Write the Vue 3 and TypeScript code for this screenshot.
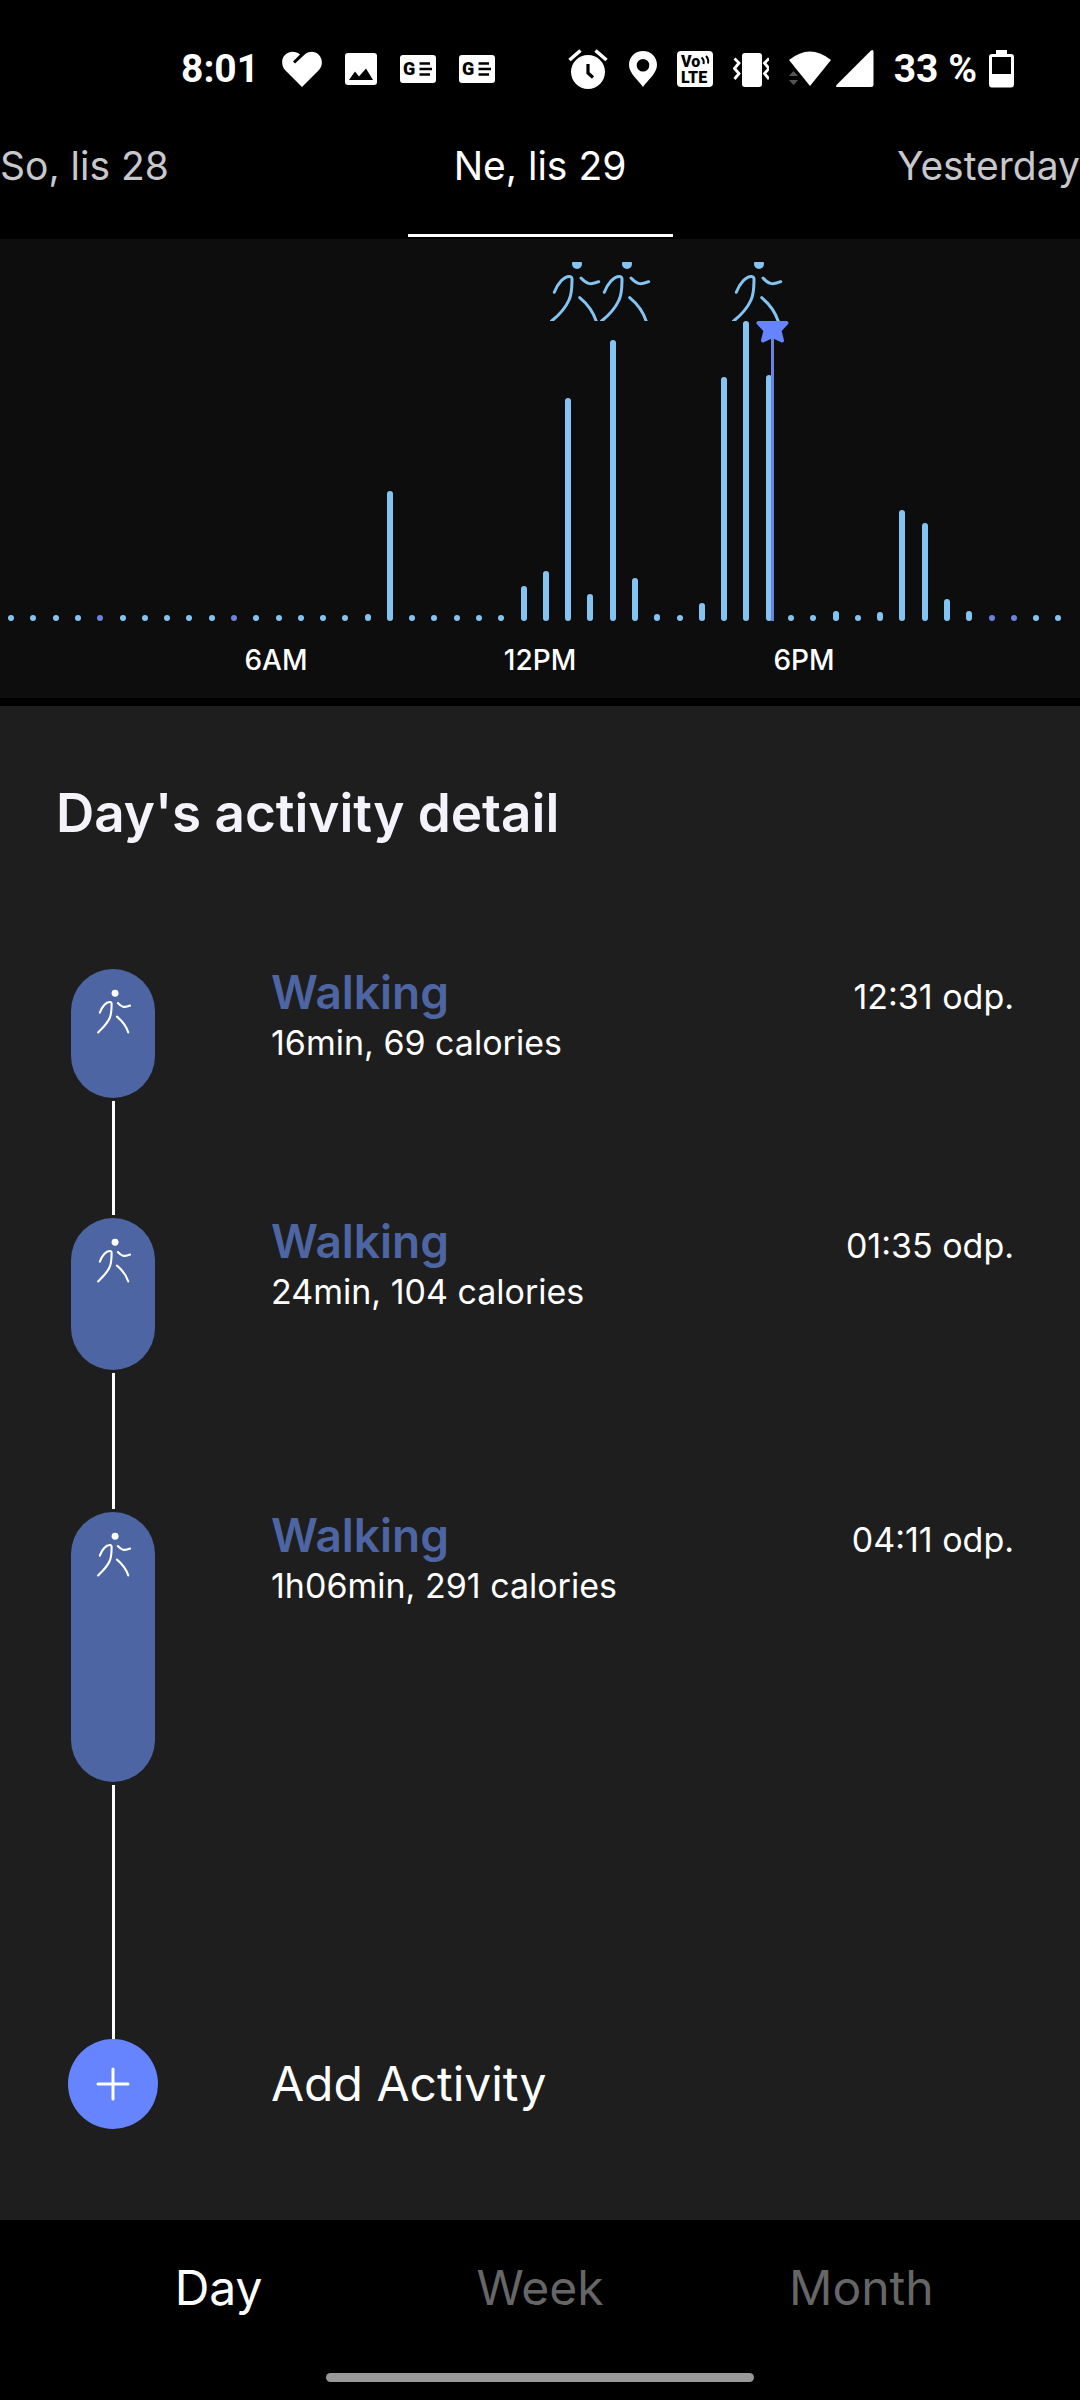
<script setup lang="ts">
interface Bar {
  height: number
  night?: boolean
}

interface Activity {
  name: string
  summary: string
  time: string
  pill: number
  row: number
}

const DOT = 6
const heights: Record<number, number> = {
  16: 7, 17: 130, 23: 35, 24: 50, 25: 223, 26: 27, 27: 281, 28: 43, 29: 7,
  31: 18, 32: 244, 33: 300, 34: 246, 37: 10, 39: 9, 40: 111, 41: 98, 42: 22, 43: 10,
}
const nightSlots = [4, 10, 44, 45]

// One bar for each half hour of the day
const bars: Bar[] = Array.from({ length: 48 }, (_, i) => ({
  height: heights[i] ?? DOT,
  night: nightSlots.includes(i),
}))

const walkMarks = [50.9, 55.6, 67.8]

const dates = ['So, lis 28', 'Ne, lis 29', 'Yesterday']
const hours = ['6AM', '12PM', '6PM']
const periods = ['Day', 'Week', 'Month']

const activities: Activity[] = [
  { name: 'Walking', summary: '16min, 69 calories', time: '12:31 odp.', pill: 129, row: 249 },
  { name: 'Walking', summary: '24min, 104 calories', time: '01:35 odp.', pill: 152, row: 294 },
  { name: 'Walking', summary: '1h06min, 291 calories', time: '04:11 odp.', pill: 270, row: 527 },
]
</script>

<template>
  <div class="screen">
    <header class="status">
      <div class="status-left">
        <span class="clock">8:01</span>
        <svg width="40" height="40" viewBox="0 0 40 40">
          <path d="M20 38 L3.500 21.500 C-1 17 -1 9 3.500 5.500 C8 1.500 14 2 18 5.500 L11 12.500 L13 14.500 L23.500 4.800 C27.500 1.700 33 2 36.500 5.500 C41 10 41 17 36.500 21.500 Z" fill="#fff" />
        </svg>
        <svg width="32" height="40" viewBox="0 0 32 40">
          <rect x="0" y="4" width="32" height="32" rx="3" fill="#fff" />
          <path d="M4 31 L10 22.500 L14 27.500 L21 19.500 L28 31 Z" fill="#000" />
        </svg>
        <svg v-for="n in 2" :key="n" width="36" height="40" viewBox="0 0 36 40">
          <rect x="0" y="6" width="36" height="28" rx="3" fill="#fff" />
          <text x="3" y="26" class="glyph" font-size="18">G</text>
          <path d="M19.500 14.500 H30 M19.500 20 H32 M19.500 25.500 H30" stroke="#000" stroke-width="2.500" />
        </svg>
      </div>
      <div class="status-right">
        <svg width="42" height="40" viewBox="0 0 42 40">
          <circle cx="21" cy="23" r="17" fill="#fff" />
          <path d="M2.500 11 L13.500 1.500 M39.500 11 L28.500 1.500" stroke="#fff" stroke-width="3.600" />
          <path d="M21 15 V24 L26 28.500" fill="none" stroke="#000" stroke-width="3.200" />
        </svg>
        <svg width="28" height="40" viewBox="0 0 28 40">
          <path fill-rule="evenodd" d="M14 2 C6 2 0 8 0 16 C0 24 9 31 14 38 C19 31 28 24 28 16 C28 8 22 2 14 2 Z M14 10 A6.300 6.300 0 1 1 14 22.600 A6.300 6.300 0 1 1 14 10 Z" fill="#fff" />
        </svg>
        <svg width="36" height="40" viewBox="0 0 36 40">
          <rect x="0" y="2" width="36" height="36" rx="4" fill="#fff" />
          <text x="4" y="18" class="glyph" font-size="16">Vo</text>
          <path d="M24.500 8.500 Q27.500 11 26.500 15 M29 7 Q32 10 31 14.500" fill="none" stroke="#000" stroke-width="2" />
          <text x="4" y="34" class="glyph" font-size="16">LTE</text>
        </svg>
        <svg width="36" height="40" viewBox="0 0 36 40">
          <rect x="9" y="4" width="20" height="34" rx="3" fill="#fff" />
          <path d="M1.500 9.500 L6 14 L1.500 19.500 L6 24.500 L1.500 30 M36 9.500 L31.500 14 L36 19.500 L31.500 24.500 L36 30" fill="none" stroke="#fff" stroke-width="2.800" />
        </svg>
        <svg width="85" height="40" viewBox="0 0 85 40">
          <path d="M0 11 Q21 -6 42 11 L21 37 Z" fill="#fff" />
          <path d="M0 27 L4.500 22 L9 27 Z M0 31 L4.500 36 L9 31 Z" fill="#555" />
          <path d="M82 1.500 Q84.500 0 84.500 3 V36 Q84.500 38 82 38 H48 Q46 38 48 35.500 Z" fill="#fff" />
        </svg>
        <div class="battery">
          <span class="clock">33 %</span>
          <svg width="25" height="40" viewBox="0 0 25 40">
            <path fill-rule="evenodd" d="M7 1 H18 V5 H22 Q25 5 25 8 V35 Q25 38.500 22 38.500 H3 Q0 38.500 0 35 V8 Q0 5 3 5 H7 Z M3 8 V25 H22 V8 Z" fill="#fff" />
          </svg>
        </div>
      </div>
    </header>

    <nav class="dates">
      <button v-for="(date, i) in dates" :key="date" class="date" :class="{ current: i === 1 }">{{ date }}</button>
    </nav>

    <section class="chart">
      <svg
        v-for="left in walkMarks"
        :key="left"
        class="walk-mark"
        :style="{ left: left + '%' }"
        width="52"
        height="59"
        viewBox="0 0 52 59"
      >
        <circle cx="27" cy="2" r="5" />
        <path d="M4.300 30.300 C8 21 14 14.300 19.500 14.500 Q22.200 14.600 22 18 C21.800 26 22 32 19 38 C15 47 8 54 1 59.500 M31 16 C36 21.500 40 23.500 48.700 19.700 M29.700 35.700 C38 42.500 43 49 46.500 60" />
      </svg>
      <div class="bars">
        <div v-for="(bar, i) in bars" :key="i" class="slot">
          <div class="bar" :class="{ night: bar.night }" :style="{ height: bar.height + 'px' }"></div>
        </div>
        <div class="goal">
          <svg width="33" height="23" viewBox="0 0 33 23">
            <path d="M2.500 2 H30.500 L23.500 9.500 L26 19.500 L16.500 15 L7 19.500 L9.500 9.500 Z" />
          </svg>
        </div>
      </div>
      <div class="hours">
        <span v-for="hour in hours" :key="hour">{{ hour }}</span>
      </div>
    </section>

    <main class="detail">
      <h1>Day's activity detail</h1>
      <ul class="timeline">
        <li v-for="(item, i) in activities" :key="i" class="activity" :style="{ minHeight: item.row + 'px' }">
          <div class="rail">
            <div class="pill" :style="{ height: item.pill + 'px' }">
              <svg width="36" height="46" viewBox="-2 -4 52 66">
                <circle cx="27" cy="2" r="5" />
                <path d="M5 30 C8 21 14 14.300 19.500 14.500 Q22.200 14.600 22 18 C21.800 26 22 32 19 38 C15 47 8 53 2.500 58.500 M31 16 C36 21.500 40 23.500 48.700 19.700 M29.700 35.700 C38 42.500 43 49 46 58.500" />
              </svg>
            </div>
            <div class="connector"></div>
          </div>
          <div class="info">
            <div class="title-row">
              <h2>{{ item.name }}</h2>
              <time>{{ item.time }}</time>
            </div>
            <p>{{ item.summary }}</p>
          </div>
        </li>
      </ul>
      <button class="add">
        <span class="add-icon">
          <svg width="34" height="34" viewBox="0 0 34 34">
            <path d="M17 2 V32 M2 17 H32" fill="none" stroke="#fff" stroke-width="3" stroke-linecap="round" />
          </svg>
        </span>
        <span>Add Activity</span>
      </button>
    </main>

    <footer class="bottom">
      <nav class="periods">
        <button v-for="(period, i) in periods" :key="period" class="period" :class="{ current: i === 0 }">{{ period }}</button>
      </nav>
      <div class="handle"></div>
    </footer>
  </div>
</template>

<style>
body {
  margin: 0;
  background: #000;
}
</style>

<style scoped>
.screen {
  display: flex;
  flex-direction: column;
  min-height: 100vh;
  background: #000;
  color: #fff;
  font-family: Inter, "Liberation Sans", sans-serif;
  overflow: hidden;
}

button {
  border: 0;
  padding: 0;
  background: none;
  color: inherit;
  font: inherit;
  white-space: nowrap;
}

svg {
  display: block;
  flex: none;
}

.status {
  display: flex;
  justify-content: space-between;
  padding: 41px 66px 0 181px;
}

.status-left,
.status-right,
.battery {
  display: flex;
  align-items: center;
}

.status-left {
  gap: 23px;
}

.status-right {
  gap: 20px;
}

.battery {
  gap: 12px;
}

.clock {
  font: 700 39px/56px Roboto, sans-serif;
}

.glyph {
  font-family: Roboto, sans-serif;
  font-weight: 900;
  fill: #000;
}

.dates {
  display: grid;
  grid-template-columns: 1fr 265px 1fr;
  padding-bottom: 2px;
}

.date {
  padding: 45px 0 44px;
  border-bottom: 3px solid transparent;
  font-size: 39px;
  line-height: 48px;
  color: #c8c8cc;
  text-align: left;
}

.date:last-child {
  text-align: right;
}

.date.current {
  border-color: #fff;
  color: #fff;
  text-align: center;
}

.chart {
  position: relative;
  padding: 82px 0 20px;
  background: #0d0d0d;
  border-bottom: 8px solid #000;
}

.walk-mark {
  position: absolute;
  top: 23px;
  fill: none;
  stroke: #84c4f3;
  stroke-width: 3;
  stroke-linecap: round;
}

.walk-mark circle {
  fill: #84c4f3;
  stroke: none;
}

.bars {
  position: relative;
  display: flex;
  align-items: flex-end;
  height: 300px;
  padding-right: 1%;
}

.slot {
  flex: 1;
  display: flex;
  justify-content: center;
}

.bar {
  width: 6px;
  border-radius: 3px;
  background: #84c4f3;
}

.bar.night {
  background: #6b83dd;
}

.goal {
  position: absolute;
  top: 0;
  bottom: 0;
  left: 70%;
  display: flex;
  justify-content: center;
  width: 33px;
  background: linear-gradient(#6b83dd, #6b83dd) center / 3px 100% no-repeat;
}

.goal path {
  fill: #6784ff;
  stroke: #6784ff;
  stroke-width: 4;
  stroke-linejoin: round;
}

.hours {
  display: grid;
  grid-template-columns: repeat(3, 1fr);
  margin-top: 21px;
  padding: 0 144px;
  font-size: 28px;
  line-height: 36px;
  font-weight: 500;
  text-align: center;
}

.detail {
  flex: 1;
  display: flex;
  flex-direction: column;
  padding: 77px 66px 90px 56px;
  background: #1e1e1e;
}

h1,
h2,
p {
  margin: 0;
}

h1 {
  font-size: 53px;
  line-height: 60px;
  font-weight: 600;
  color: #f4f2fa;
}

.timeline {
  margin: 126px 0 0 12px;
  padding: 0;
  list-style: none;
}

.activity {
  display: flex;
  gap: 113px;
}

.rail {
  display: flex;
  flex-direction: column;
  align-items: center;
  width: 90px;
}

.pill {
  box-sizing: border-box;
  display: flex;
  justify-content: center;
  width: 84px;
  padding-top: 20px;
  border-radius: 42px;
  background: #4e65a3;
}

.pill svg {
  fill: none;
  stroke: #fff;
  stroke-width: 3;
  stroke-linecap: round;
}

.pill circle {
  fill: #fff;
  stroke: none;
}

.connector {
  flex: 1;
  width: 3px;
  margin: 3px 0;
  background: #fff;
}

.activity:last-child .connector {
  margin-bottom: 0;
}

.info {
  flex: 1;
}

.title-row {
  display: flex;
  justify-content: space-between;
  align-items: baseline;
}

h2 {
  font-size: 46px;
  line-height: 46px;
  font-weight: 600;
  color: #4e65a3;
}

time,
p {
  font-size: 34px;
  line-height: 40px;
}

p {
  margin-top: 6px;
}

.add {
  display: flex;
  align-items: center;
  gap: 113px;
  margin-left: 12px;
  font-size: 48px;
  line-height: 56px;
}

.add-icon {
  display: flex;
  align-items: center;
  justify-content: center;
  width: 90px;
  height: 90px;
  border-radius: 50%;
  background: #6784ff;
}

.bottom {
  padding: 40px 58px 18px;
}

.periods {
  display: grid;
  grid-template-columns: repeat(3, 1fr);
  font-size: 48px;
  line-height: 56px;
}

.period {
  color: #666;
}

.period.current {
  color: #fff;
}

.handle {
  width: 428px;
  height: 9px;
  margin: 57px auto 0;
  border-radius: 5px;
  background: #999;
}
</style>
